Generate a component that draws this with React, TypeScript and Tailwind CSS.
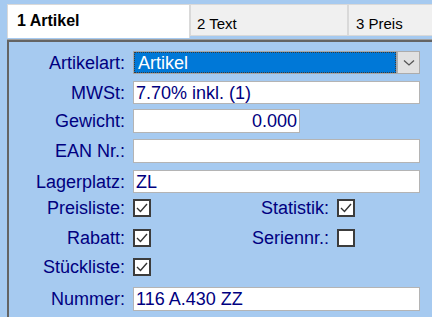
import { ReactNode } from 'react';

const font = { fontFamily: '"Liberation Sans", Arial, sans-serif' };

function Label({ children, w = 'w-[116px]' }: { children: ReactNode; w?: string }) {
  return (
    <span className={`${w} shrink-0 text-right text-[18px] leading-none text-[#000080]`}>{children}</span>
  );
}

function Field({ value = '', w = 'w-[287px]', right = false }: { value?: string; w?: string; right?: boolean }) {
  return (
    <div
      className={`${w} h-full shrink-0 border border-[#b4b4b4] bg-white px-[2px] flex items-center text-[18px] leading-none text-[#000080] ${right ? 'justify-end' : ''}`}
    >
      {value}
    </div>
  );
}

function Check({ checked }: { checked: boolean }) {
  return (
    <div className="h-[18px] w-[18px] shrink-0 border-2 border-[#3c3c3c] bg-white flex items-center justify-center">
      {checked && (
        <svg width="14" height="14" viewBox="0 0 14 14">
          <path d="M2 7 L5.5 10.5 L12 3" fill="none" stroke="#333" strokeWidth="1.4" />
        </svg>
      )}
    </div>
  );
}

export default function App() {
  return (
    <div className="h-[317px] w-[432px] overflow-hidden bg-[#a6caf0]" style={font}>
      {/* tabs */}
      <div className="flex items-start pl-[7px] pt-[4px]">
        <div className="h-[34px] w-[183px] shrink-0 border border-b-0 border-[#d9d9d9] bg-white pl-[9px] pt-[8px] text-[16px] font-bold leading-none text-black">
          1 Artikel
        </div>
        <div className="h-[32px] w-[158px] shrink-0 border border-[#d9d9d9] bg-[#f0f0f0] pl-[6px] pt-[11px] text-[15px] leading-none text-black">
          2 Text
        </div>
        <div className="h-[32px] flex-1 border border-r-0 border-[#d9d9d9] bg-[#f0f0f0] pl-[7px] pt-[11px] text-[15px] leading-none text-black">
          3 Preis
        </div>
      </div>

      {/* panel */}
      <div className="ml-[7px] mt-[1px] border-t border-[#a0a0a0]">
        <div className="h-[300px] border-l-2 border-t-2 border-[#646464] flex flex-col">
          <div className="mt-[9px] flex h-[23px] items-center gap-[8px]">
            <Label>Artikelart:</Label>
            <div className="flex h-full">
              <div className="h-full w-[264px] border border-[#a8a8a8] bg-[#e9dca0]">
                <div className="h-full border border-dotted border-[#3a3a3a] bg-[#0078d7] pl-[3px] flex items-center text-[18px] leading-none text-white">
                  Artikel
                </div>
              </div>
              <div className="flex h-full w-[23px] items-center justify-center border border-[#acacac] bg-[#e1e1e1]">
                <svg width="12" height="8" viewBox="0 0 12 8">
                  <path d="M1 1.5 L6 6 L11 1.5" fill="none" stroke="#555" strokeWidth="1.3" />
                </svg>
              </div>
            </div>
          </div>

          <div className="mt-[7px] flex h-[23px] items-center gap-[8px]">
            <Label>MWSt:</Label>
            <Field value="7.70% inkl. (1)" />
          </div>

          <div className="mt-[5px] flex h-[24px] items-center gap-[8px]">
            <Label>Gewicht:</Label>
            <Field value="0.000" w="w-[167px]" right />
          </div>

          <div className="mt-[6px] flex h-[24px] items-center gap-[8px]">
            <Label>EAN Nr.:</Label>
            <Field />
          </div>

          <div className="mt-[7px] flex h-[23px] items-center gap-[8px]">
            <Label>Lagerplatz:</Label>
            <Field value="ZL" />
          </div>

          <div className="mt-[6px] flex h-[18px] items-center gap-[8px]">
            <Label>Preisliste:</Label>
            <Check checked />
            <Label w="w-[170px]">Statistik:</Label>
            <Check checked />
          </div>

          <div className="mt-[12px] flex h-[18px] items-center gap-[8px]">
            <Label>Rabatt:</Label>
            <Check checked />
            <Label w="w-[170px]">Seriennr.:</Label>
            <Check checked={false} />
          </div>

          <div className="mt-[11px] flex h-[18px] items-center gap-[8px]">
            <Label>Stückliste:</Label>
            <Check checked />
          </div>

          <div className="mt-[11px] flex h-[24px] items-center gap-[8px]">
            <Label>Nummer:</Label>
            <Field value="116 A.430 ZZ" />
          </div>
        </div>
      </div>
    </div>
  );
}
